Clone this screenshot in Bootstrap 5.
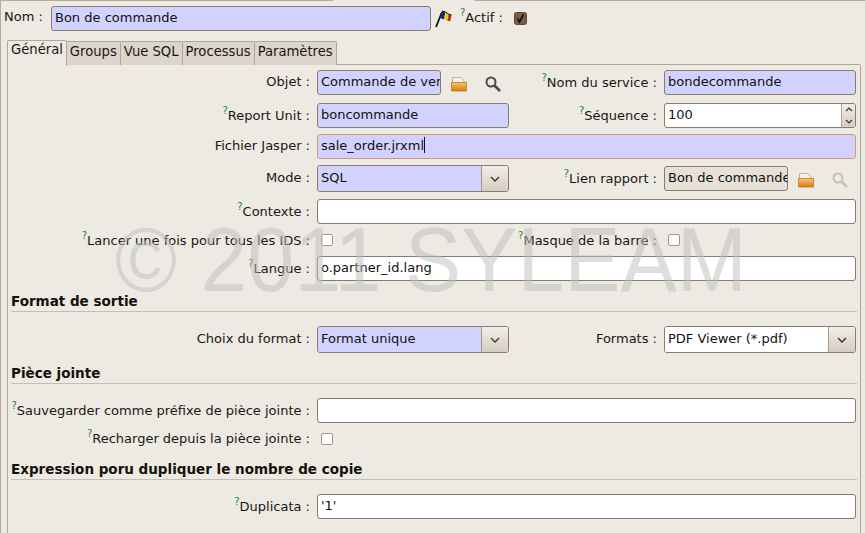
<!DOCTYPE html>
<html lang="fr">
<head>
<meta charset="utf-8">
<title>Bon de commande</title>
<link href="https://cdn.jsdelivr.net/npm/bootstrap@5.3.0/dist/css/bootstrap.min.css" rel="stylesheet">
<style>
html,body{height:533px;overflow:hidden}
body{background:#ede9e3;color:#1c1712;font-family:"DejaVu Sans",sans-serif;font-size:13px;line-height:16px}
.page{height:533px;border-left:1px solid #b8a99a;position:relative;overflow:hidden}
.topline{height:1px}
.topline i{display:block;height:1px;background:#b8a99a}
.seg1{width:332px}
.seg2{width:390px}
.namebar{margin-top:4px;height:26px;padding-left:3px}
.namelbl{width:47px;white-space:nowrap;padding-bottom:2px}
.form-control.fld{height:25px;min-height:0;border:1px solid #8c7a6b;border-radius:3px;padding:2px 3px;font-size:13px;line-height:17px;color:#111;white-space:nowrap;overflow:hidden;background-color:#fff;flex:none}
.form-control.req{background-color:#d2d2ff}
.form-control.off{background-color:#e6e0d8}
.form-control.foc{border-color:#d8947a}
.w380{width:380px}.w124{width:124px}.w192{width:192px}.w539{width:539px}
.tabsbar{margin:9px 0 0 6px;height:24px;border:0;align-items:flex-end;position:relative;z-index:3}
.tabsbar .nav-link{height:24px;padding:1px 3px 0;border:1px solid #b3a597;border-left:0;border-bottom:0;border-radius:0 2px 0 0;background:#dcd5cb;color:#1c1712;font-size:13.17px;line-height:18px;margin:0}
.tabsbar .nav-link.active{height:26px;margin-bottom:-1px;padding:0 3px;background:#ede9e3;border:1px solid #b3a597;border-bottom:0;border-radius:2px 2px 0 0}
.panel{margin-left:6px;width:854px;height:480px;border:1px solid #b3a597;border-radius:2px;padding:5px 0 0 3px;position:relative}
.lab{text-align:right;white-space:nowrap;flex:none}
.lab.up{padding-bottom:2px}
.lab.dn{padding-top:2px}
.mt6x{margin-top:6px}.mt7x{margin-top:7px}.mt8x{margin-top:8px}.mt12x{margin-top:12px}.mt14x{margin-top:14px}
.lab1{width:299px}
.lab3{width:148px}
.lab155{width:155px}
.lab324{width:324px}
.gp{margin-left:7px}
.gc{margin-left:11px}
.hint{color:#1f8a1f;font-size:10px;position:relative;top:-6px;line-height:0}
.wmark{position:absolute;left:107px;top:145px;font-family:"Liberation Sans",sans-serif;font-size:90px;line-height:100px;color:rgba(190,190,190,.5);white-space:nowrap;z-index:5;pointer-events:none;transform:scaleX(.936);transform-origin:left center}
.chk.form-check-input{width:12px;height:12px;margin-top:0;margin-bottom:0;border:1px solid #a3968a;border-radius:2px;background-color:#fff;flex:none}
.sel{display:flex;height:27px;border:1px solid #8c7a6b;border-radius:3px;overflow:hidden;width:192px;flex:none}
.sel span{flex:1;padding:4px 3px;background:#d2d2ff;color:#111;white-space:nowrap}
.sel.wh span{background:#fff}
.sel b{width:27px;flex:none;background:linear-gradient(#f1ede7,#d5cdc2);border-left:1px solid #a59789;display:flex;align-items:center;justify-content:center}
.spinb{width:14px;border-left:1px solid #b3a597;background:linear-gradient(#f1ede7,#d5cdc2);display:flex;flex-direction:column;align-items:center;justify-content:space-around;flex:none}
.form-control.spin{display:flex;padding:0;width:192px}
.spin span{flex:1;padding:2px 3px}
.hd{font-weight:700;font-size:13.5px;line-height:16px;border-bottom:1px solid #c9bdaf;height:19px;width:846px;color:#14100c}
.caret{display:inline-block;width:1px;height:16px;background:#111;vertical-align:-3px}
.ico{flex:none;display:block}
.flagi{margin-left:3px}
.actb{margin-left:11px}
.i1{margin-left:9px}
.i2{margin-left:16px}
</style>
</head>
<body>
<svg width="0" height="0" class="position-absolute"><defs><linearGradient id="fg" x1="0" y1="0" x2="0" y2="1"><stop offset="0" stop-color="#fbc76c"/><stop offset="1" stop-color="#d9780f"/></linearGradient></defs></svg>
<div class="page">
  <div class="topline d-flex justify-content-between"><i class="seg1"></i><i class="seg2"></i></div>
  <div class="namebar d-flex align-items-center">
    <div class="namelbl">Nom :</div>
    <div class="form-control fld req w380">Bon de commande</div>
    <svg class="ico flagi" width="18" height="19" viewBox="0 0 18 19">
      <path d="M2 18 L8 3" stroke="#111" stroke-width="1.800" fill="none"/>
      <path d="M8 2 L11.500 3 L10 10.500 L6 9Z" fill="#1a2a6c"/>
      <path d="M11.500 3 L14.500 5 L13.500 12 L10 10.500Z" fill="#eccc20"/>
      <path d="M14.500 5 L17.500 6 L16.500 12 L13.500 12Z" fill="#cc2a1c"/>
      <path d="M8 2 L11.500 3 L14.500 5 L17.500 6" stroke="#111" fill="none"/>
    </svg>
    <div class="ms-2 text-nowrap"><span class="hint">?</span>Actif :</div>
    <svg class="ico actb" width="13" height="13" viewBox="0 0 13 13">
      <rect x=".5" y=".5" width="12" height="12" rx="2" fill="#7a5a48" stroke="#5e4636"/>
      <path d="M3.500 6.500 L5.500 10 L9.500 2.500" stroke="#111" stroke-width="1.600" fill="none"/>
    </svg>
  </div>
  <ul class="nav tabsbar">
    <li class="nav-item"><a class="nav-link active" href="#">Général</a></li>
    <li class="nav-item"><a class="nav-link" href="#">Groups</a></li>
    <li class="nav-item"><a class="nav-link" href="#">Vue SQL</a></li>
    <li class="nav-item"><a class="nav-link" href="#">Processus</a></li>
    <li class="nav-item"><a class="nav-link" href="#">Paramètres</a></li>
  </ul>
  <div class="panel">
    <div class="wmark">© 2011 SYLEAM</div>

    <div class="d-flex align-items-center">
      <div class="lab lab1 up">Objet :</div>
      <div class="form-control fld req w124 gp">Commande de vente</div>
      <svg class="ico i1" width="18" height="18" viewBox="0 0 18 18"><path d="M2.500 3.500h8l3.500 3v5H2.500z" fill="#f4f1ea" stroke="#b9b1a4"/><rect x="1.500" y="8.500" width="15" height="8.500" fill="url(#fg)" stroke="#c47a20" stroke-width=".8"/></svg>
      <svg class="ico i2" width="18" height="18" viewBox="0 0 18 18"><circle cx="7" cy="8" r="4.500" fill="none" stroke="#4a4a46" stroke-width="2"/><path d="M10.500 11.500L16 17" stroke="#4a4a46" stroke-width="2.600"/></svg>
      <div class="lab lab155"><span class="hint">?</span>Nom du service :</div>
      <div class="form-control fld req w192 gp">bondecommande</div>
    </div>

    <div class="d-flex align-items-center mt8x">
      <div class="lab lab1"><span class="hint">?</span>Report Unit :</div>
      <div class="form-control fld req w192 gp">boncommande</div>
      <div class="lab lab3"><span class="hint">?</span>Séquence :</div>
      <div class="form-control fld spin gp"><span>100</span><div class="spinb">
        <svg width="8" height="5" viewBox="0 0 8 5"><path d="M1 4l3-3 3 3" stroke="#333" fill="none" stroke-width="1.200"/></svg>
        <svg width="8" height="5" viewBox="0 0 8 5"><path d="M1 1l3 3 3-3" stroke="#333" fill="none" stroke-width="1.200"/></svg>
      </div></div>
    </div>

    <div class="d-flex align-items-center mt6x">
      <div class="lab lab1 up">Fichier Jasper :</div>
      <div class="form-control fld req foc gp w539">sale_order.jrxml<span class="caret"></span></div>
    </div>

    <div class="d-flex align-items-center mt6x">
      <div class="lab lab1 up">Mode :</div>
      <div class="sel gp"><span>SQL</span><b><svg width="10" height="6" viewBox="0 0 10 6"><path d="M1 1l4 4 4-4" stroke="#333" fill="none" stroke-width="1.300"/></svg></b></div>
      <div class="lab lab3"><span class="hint">?</span>Lien rapport :</div>
      <div class="form-control fld off w124 gp">Bon de commande</div>
      <svg class="ico i1" width="18" height="18" viewBox="0 0 18 18"><path d="M2.500 3.500h8l3.500 3v5H2.500z" fill="#f4f1ea" stroke="#b9b1a4"/><rect x="1.500" y="8.500" width="15" height="8.500" fill="url(#fg)" stroke="#c47a20" stroke-width=".8"/></svg>
      <svg class="ico i2" width="18" height="18" viewBox="0 0 18 18"><circle cx="7" cy="8" r="4.500" fill="none" stroke="#c4c0ba" stroke-width="2"/><path d="M10.500 11.500L16 17" stroke="#c4c0ba" stroke-width="2.600"/></svg>
    </div>

    <div class="d-flex align-items-center mt7x">
      <div class="lab lab1"><span class="hint">?</span>Contexte :</div>
      <div class="form-control fld gp w539"></div>
    </div>

    <div class="d-flex align-items-center mt7x">
      <div class="lab lab1 dn"><span class="hint">?</span>Lancer une fois pour tous les IDS :</div>
      <input type="checkbox" class="form-check-input chk gc">
      <div class="lab lab324 dn"><span class="hint">?</span>Masque de la barre :</div>
      <input type="checkbox" class="form-check-input chk gc">
    </div>

    <div class="d-flex align-items-center mt7x">
      <div class="lab lab1"><span class="hint">?</span>Langue :</div>
      <div class="form-control fld gp w539">o.partner_id.lang</div>
    </div>

    <div class="hd mt12x">Format de sortie</div>

    <div class="d-flex align-items-center mt14x">
      <div class="lab lab1 up">Choix du format :</div>
      <div class="sel gp"><span>Format unique</span><b><svg width="10" height="6" viewBox="0 0 10 6"><path d="M1 1l4 4 4-4" stroke="#333" fill="none" stroke-width="1.300"/></svg></b></div>
      <div class="lab lab3 up">Formats :</div>
      <div class="sel wh gp"><span>PDF Viewer (*.pdf)</span><b><svg width="10" height="6" viewBox="0 0 10 6"><path d="M1 1l4 4 4-4" stroke="#333" fill="none" stroke-width="1.300"/></svg></b></div>
    </div>

    <div class="hd mt12x">Pièce jointe</div>

    <div class="d-flex align-items-center mt14x">
      <div class="lab lab1"><span class="hint">?</span>Sauvegarder comme préfixe de pièce jointe :</div>
      <div class="form-control fld gp w539"></div>
    </div>

    <div class="d-flex align-items-center mt8x">
      <div class="lab lab1"><span class="hint">?</span>Recharger depuis la pièce jointe :</div>
      <input type="checkbox" class="form-check-input chk gc">
    </div>

    <div class="hd mt14x">Expression poru dupliquer le nombre de copie</div>

    <div class="d-flex align-items-center mt14x">
      <div class="lab lab1"><span class="hint">?</span>Duplicata :</div>
      <div class="form-control fld gp w539">'1'</div>
    </div>
  </div>
</div>
<script src="https://cdn.jsdelivr.net/npm/bootstrap@5.3.0/dist/js/bootstrap.bundle.min.js"></script>
</body>
</html>
